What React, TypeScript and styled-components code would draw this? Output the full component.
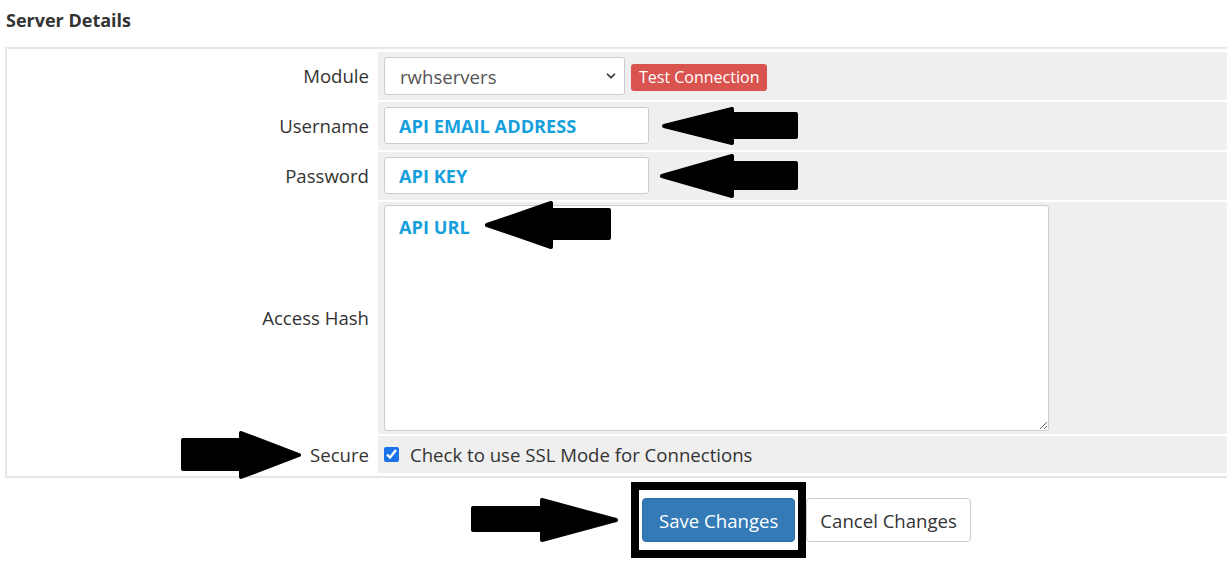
import React from "react";
import styled, { createGlobalStyle } from "styled-components";

const GlobalStyle = createGlobalStyle`
  html, body { margin: 0; padding: 0; background: #ffffff; }
  body { overflow: hidden; font-family: "Open Sans", "DejaVu Sans", sans-serif; color: #333333; }
  * { box-sizing: border-box; }
`;

const Page = styled.div`
  width: 1227px;
  height: 575px;
  overflow: hidden;
`;

const Heading = styled.h2`
  margin: 0;
  padding: 8px 0 0 6px;
  height: 47px;
  font-size: 18px;
  line-height: 24px;
  font-weight: 700;
  color: #333333;
`;

const Panel = styled.div`
  margin-left: 5px;
  width: 1260px;
  border: 2px solid #e6e6e6;
  padding: 1px;
  background: #ffffff;
`;

const FormTable = styled.table`
  width: 100%;
  border-collapse: separate;
  border-spacing: 2px;
`;

const LabelCell = styled.td`
  width: 366px;
  padding: 0 7px 0 0;
  background: #ffffff;
  vertical-align: top;
`;

const LabelBox = styled.div<{ $h: number }>`
  height: ${(p) => p.$h}px;
  display: flex;
  align-items: center;
  justify-content: flex-end;
  gap: 9px;
  font-size: 18.6px;
  line-height: 24px;
  color: #333333;
`;

const FieldCell = styled.td`
  padding: 0 0 0 6px;
  background: #efefef;
  vertical-align: top;
`;

const FieldBox = styled.div<{ $h: number; $pt?: number; $center?: boolean }>`
  height: ${(p) => p.$h}px;
  padding-top: ${(p) => p.$pt ?? 0}px;
  display: flex;
  align-items: ${(p) => (p.$center ? "center" : "flex-start")};
`;

const SelectBox = styled.div`
  width: 241px;
  height: 38px;
  border: 1px solid #cccccc;
  border-radius: 3px;
  background: #ffffff;
  display: flex;
  align-items: center;
  justify-content: space-between;
  padding: 0 6px 0 15px;
  font-size: 18.6px;
  color: #555555;
`;

const TestButton = styled.button`
  margin: 7px 0 0 6px;
  height: 27px;
  padding: 0 8px;
  border: none;
  border-radius: 3px;
  background: #d9534f;
  color: #ffffff;
  font-family: "Open Sans", "DejaVu Sans", sans-serif;
  font-size: 16px;
  line-height: 27px;
`;

const TextInput = styled.input`
  width: 265px;
  height: 37px;
  border: 1px solid #cccccc;
  border-radius: 3px;
  background: #ffffff;
  padding: 0 14px;
  font-family: "Open Sans", "DejaVu Sans", sans-serif;
  font-size: 18.2px;
  font-weight: 700;
  color: #159fdc;
  outline: none;
`;

const AreaWrap = styled.div`
  position: relative;
  width: 665px;
  height: 226px;
`;

const TextArea = styled.textarea`
  width: 665px;
  height: 226px;
  border: 1px solid #cccccc;
  border-radius: 3px;
  background: #ffffff;
  padding: 9px 14px;
  font-family: "Open Sans", "DejaVu Sans", sans-serif;
  font-size: 18.2px;
  font-weight: 700;
  line-height: 24px;
  color: #159fdc;
  outline: none;
  resize: vertical;
  display: block;
`;

const OverlayArrow = styled.div`
  position: absolute;
  left: 101px;
  top: -4px;
  line-height: 0;
`;

const CheckLabel = styled.label`
  display: flex;
  align-items: center;
  gap: 11px;
  font-size: 18.6px;
  color: #333333;
`;

const CheckBox = styled.input`
  width: 15px;
  height: 15px;
  margin: 0;
  accent-color: #1a73e8;
`;

const ArrowSlot = styled.span<{ $ml: number; $mt: number }>`
  display: inline-flex;
  line-height: 0;
  margin-left: ${(p) => p.$ml}px;
  margin-top: ${(p) => p.$mt}px;
`;

const SecureArrowSlot = styled.span`
  display: flex;
  align-items: center;
  height: 24px;
  line-height: 0;
`;

const ButtonRow = styled.div`
  display: flex;
  align-items: center;
  padding: 4px 0 0 471px;
`;

const Frame = styled.div`
  margin-left: 13px;
  border: 8px solid #000000;
  padding: 8px 3px;
  display: flex;
`;

const SaveButton = styled.button`
  height: 44px;
  padding: 0 16px;
  border: 1px solid #2e6da4;
  border-radius: 4px;
  background: #337ab7;
  color: #ffffff;
  font-family: "Open Sans", "DejaVu Sans", sans-serif;
  font-size: 18.6px;
`;

const CancelButton = styled.button`
  height: 44px;
  padding: 0 13px;
  border: 1px solid #cccccc;
  border-radius: 4px;
  background: #ffffff;
  color: #333333;
  font-family: "Open Sans", "DejaVu Sans", sans-serif;
  font-size: 18.6px;
`;

type ArrowProps = { w: number; h: number; head: number; shaftTop: number; shaftBottom: number; dir: "left" | "right" };

const Arrow = ({ w, h, head, shaftTop, shaftBottom, dir }: ArrowProps) => {
  const i = 2;
  const pts =
    dir === "left"
      ? [
          [i, h / 2],
          [head, i],
          [head, shaftTop],
          [w - i, shaftTop],
          [w - i, shaftBottom],
          [head, shaftBottom],
          [head, h - i],
        ]
      : [
          [w - i, h / 2],
          [w - head, i],
          [w - head, shaftTop],
          [i, shaftTop],
          [i, shaftBottom],
          [w - head, shaftBottom],
          [w - head, h - i],
        ];
  return (
    <svg width={w} height={h} viewBox={`0 0 ${w} ${h}`} style={{ flexShrink: 0 }}>
      <polygon
        points={pts.map((p) => p.join(",")).join(" ")}
        fill="#000"
        stroke="#000"
        strokeWidth={4}
        strokeLinejoin="round"
      />
    </svg>
  );
};

const Chevron = () => (
  <svg width="14" height="14" viewBox="0 0 24 24" fill="none" stroke="#333" strokeWidth="3" strokeLinecap="round" strokeLinejoin="round">
    <path d="M6 9l6 6 6-6" />
  </svg>
);

export default function App() {
  return (
    <Page>
      <GlobalStyle />
      <Heading>Server Details</Heading>
      <Panel>
        <FormTable>
          <tbody>
            <tr>
              <LabelCell>
                <LabelBox $h={48}>Module</LabelBox>
              </LabelCell>
              <FieldCell>
                <FieldBox $h={48} $pt={5}>
                  <SelectBox>
                    <span>rwhservers</span>
                    <Chevron />
                  </SelectBox>
                  <TestButton type="button">Test Connection</TestButton>
                </FieldBox>
              </FieldCell>
            </tr>
            <tr>
              <LabelCell>
                <LabelBox $h={48}>Username</LabelBox>
              </LabelCell>
              <FieldCell>
                <FieldBox $h={48} $pt={5}>
                  <TextInput readOnly value="API EMAIL ADDRESS" />
                  <ArrowSlot $ml={13} $mt={0}>
                    <Arrow w={136} h={38} head={70} shaftTop={7} shaftBottom={30} dir="left" />
                  </ArrowSlot>
                </FieldBox>
              </FieldCell>
            </tr>
            <tr>
              <LabelCell>
                <LabelBox $h={48}>Password</LabelBox>
              </LabelCell>
              <FieldCell>
                <FieldBox $h={48} $pt={5}>
                  <TextInput readOnly value="API KEY" />
                  <ArrowSlot $ml={11} $mt={-3}>
                    <Arrow w={138} h={44} head={72} shaftTop={9} shaftBottom={34} dir="left" />
                  </ArrowSlot>
                </FieldBox>
              </FieldCell>
            </tr>
            <tr>
              <LabelCell>
                <LabelBox $h={232}>Access Hash</LabelBox>
              </LabelCell>
              <FieldCell>
                <FieldBox $h={232} $pt={3}>
                  <AreaWrap>
                    <TextArea readOnly defaultValue="API URL" />
                    <OverlayArrow>
                      <Arrow w={126} h={48} head={66} shaftTop={9} shaftBottom={37} dir="left" />
                    </OverlayArrow>
                  </AreaWrap>
                </FieldBox>
              </FieldCell>
            </tr>
            <tr>
              <LabelCell>
                <LabelBox $h={37}>
                  <SecureArrowSlot>
                    <Arrow w={120} h={48} head={60} shaftTop={9} shaftBottom={38} dir="right" />
                  </SecureArrowSlot>
                  Secure
                </LabelBox>
              </LabelCell>
              <FieldCell>
                <FieldBox $h={37} $center>
                  <CheckLabel>
                    <CheckBox type="checkbox" defaultChecked />
                    Check to use SSL Mode for Connections
                  </CheckLabel>
                </FieldBox>
              </FieldCell>
            </tr>
          </tbody>
        </FormTable>
      </Panel>
      <ButtonRow>
        <Arrow w={147} h={44} head={76} shaftTop={10} shaftBottom={32} dir="right" />
        <Frame>
          <SaveButton type="button">Save Changes</SaveButton>
        </Frame>
        <CancelButton type="button">Cancel Changes</CancelButton>
      </ButtonRow>
    </Page>
  );
}
